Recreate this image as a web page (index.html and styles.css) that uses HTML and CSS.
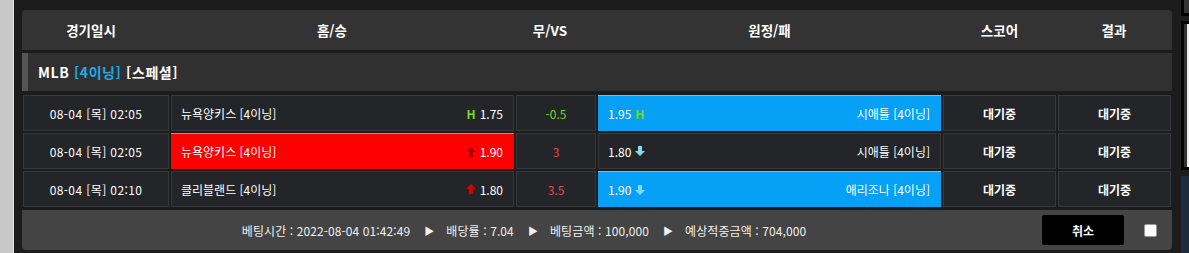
FILE: index.html
```html
<!DOCTYPE html>
<html lang="ko">
<head>
<meta charset="utf-8">
<link rel="stylesheet" href="styles.css">
</head>
<body>
<div class="side-left"></div>
<div class="main">
  <div class="board">
    <div class="thead">
      <div>경기일시</div><div>홈/승</div><div>무/VS</div><div>원정/패</div><div>스코어</div><div>결과</div>
    </div>
    <div class="league">MLB <span class="blue">[4이닝]</span> [스페셜]</div>
    <div class="rows">
      <div class="row">
        <div class="cell date">08-04 [목] 02:05</div>
        <div class="cell home"><span class="team">뉴욕양키스 [4이닝]</span><span class="odd"><span class="h">H</span>1.75</span></div>
        <div class="cell mid green">-0.5</div>
        <div class="cell away sel-blue"><span class="odd">1.95<span class="h">H</span></span><span class="team">시애틀 [4이닝]</span></div>
        <div class="cell st">대기중</div>
        <div class="cell st">대기중</div>
      </div>
      <div class="row">
        <div class="cell date">08-04 [목] 02:05</div>
        <div class="cell home sel-red"><span class="team">뉴욕양키스 [4이닝]</span><span class="odd"><svg class="arr up dark" viewBox="0 0 10 10"><path d="M5 0 L10 5 H7 V10 H3 V5 H0 Z"/></svg>1.90</span></div>
        <div class="cell mid red">3</div>
        <div class="cell away"><span class="odd">1.80<svg class="arr down" viewBox="0 0 10 10"><path d="M5 10 L10 5 H7 V0 H3 V5 H0 Z"/></svg></span><span class="team">시애틀 [4이닝]</span></div>
        <div class="cell st">대기중</div>
        <div class="cell st">대기중</div>
      </div>
      <div class="row">
        <div class="cell date">08-04 [목] 02:10</div>
        <div class="cell home"><span class="team">클리블랜드 [4이닝]</span><span class="odd"><svg class="arr up" viewBox="0 0 10 10"><path d="M5 0 L10 5 H7 V10 H3 V5 H0 Z"/></svg>1.80</span></div>
        <div class="cell mid red">3.5</div>
        <div class="cell away sel-blue"><span class="odd">1.90<svg class="arr down" viewBox="0 0 10 10"><path d="M5 10 L10 5 H7 V0 H3 V5 H0 Z"/></svg></span><span class="team">애리조나 [4이닝]</span></div>
        <div class="cell st">대기중</div>
        <div class="cell st">대기중</div>
      </div>
    </div>
    <div class="foot">
      <div class="info">
        <span>베팅시간 : 2022-08-04 01:42:49</span><span class="tri">▶</span>
        <span>배당률 : 7.04</span><span class="tri">▶</span>
        <span>베팅금액 : 100,000</span><span class="tri">▶</span>
        <span>예상적중금액 : 704,000</span>
      </div>
      <button class="cancel">취소</button>
      <span class="check"></span>
    </div>
  </div>
</div>
<div class="side-right">
  <div class="r-top"></div>
  <div class="r-mid"></div>
  <div class="r-bot"></div>
</div>
</body>
</html>
```

FILE: styles.css
```css
* { box-sizing: border-box; }
html, body { margin: 0; padding: 0; }
body {
  width: 1189px;
  height: 253px;
  overflow: hidden;
  display: flex;
  background: #1c1c1c;
  font-family: "Noto Sans CJK KR", "Noto Sans", sans-serif;
  color: #fff;
}
.side-left {
  width: 14px;
  flex: none;
  background: #c8c8c8;
  border-right: 1px solid #e2e2e2;
}
.main {
  flex: none;
  width: 1167px;
  padding: 10px 9px 0 8px;
}
.board {
  width: 1150px;
  display: flex;
  flex-direction: column;
}
.thead {
  height: 40px;
  background: #333;
  border-radius: 4px 4px 0 0;
  display: grid;
  grid-template-columns: 138px 344px 92px 347px 113px 116px;
  align-items: center;
  text-align: center;
  font-size: 13.5px;
  font-weight: bold;
}
.league {
  margin-top: 3px;
  height: 38px;
  background: #303030;
  border-left: 6px solid #555;
  display: flex;
  align-items: center;
  padding-left: 10px;
  font-size: 14px;
  font-weight: bold;
  letter-spacing: 0.6px;
  white-space: pre;
}
.blue { color: #22a9e9; }
.rows {
  margin-top: 4px;
  display: flex;
  flex-direction: column;
  gap: 2px;
  padding-left: 1px;
}
.row {
  height: 36px;
  display: grid;
  grid-template-columns: 146px 343px 80px 343px 113px 113px;
  gap: 2px;
}
.cell {
  background: #242528;
  border: 1px solid #37383b;
  display: flex;
  align-items: center;
  font-size: 12px;
}
.date { letter-spacing: 0.4px; }
.date, .mid, .st { justify-content: center; }
.st { font-weight: bold; }
.home { justify-content: space-between; padding: 0 10px 0 9px; }
.away { justify-content: space-between; padding: 0 10px 0 9px; }
.odd { display: flex; align-items: center; gap: 4px; }
.h { color: #72dc1e; font-weight: bold; font-size: 12px; }
.green { color: #72d51e; }
.red { color: #e94a4a; }
.sel-red { background: #ff0000; border: none; border-top: 1px solid #ff6b6b; padding-left: 10px; padding-right: 11px; }
.sel-blue { background: #06a0f7; border: none; border-top: 1px solid #5cc5ff; padding-left: 10px; padding-right: 11px; }
.arr { width: 10px; height: 10px; }
.arr.up { fill: #d80000; }
.arr.up.dark { fill: #a80000; }
.arr.down { fill: #80dbf8; }
.foot {
  margin-top: 3px;
  height: 40px;
  background: #444;
  border-radius: 0 0 4px 4px;
  display: flex;
  align-items: center;
  padding-right: 15px;
}
.info {
  width: 1004px;
  display: flex;
  justify-content: center;
  align-items: center;
  font-size: 12px;
  color: #f0f0f0;
  letter-spacing: 0.1px;
}
.tri { font-size: 10px; margin: 0 12px 0 14px; }
.cancel {
  margin-left: 16px;
  width: 82px;
  height: 30px;
  background: #000;
  color: #fff;
  border: none;
  border-radius: 2px;
  font-family: inherit;
  font-size: 12px;
  font-weight: bold;
}
.check {
  margin-left: 20px;
  width: 13px;
  height: 13px;
  background: #fff;
  border: 1px solid #999;
  border-radius: 2px;
}
.side-right {
  width: 8px;
  flex: none;
  display: flex;
  flex-direction: column;
}
.r-top { height: 16px; background: #333; border: 3px solid #000; border-top: none; border-right: none; }
.r-mid { margin-top: 5px; height: 149px; background: #333; border: 3px solid #000; border-right: none; box-shadow: inset -2px 0 0 #eee; }
.r-bot { margin-top: 6px; flex: 1; background: #1e2b3d; }
```
